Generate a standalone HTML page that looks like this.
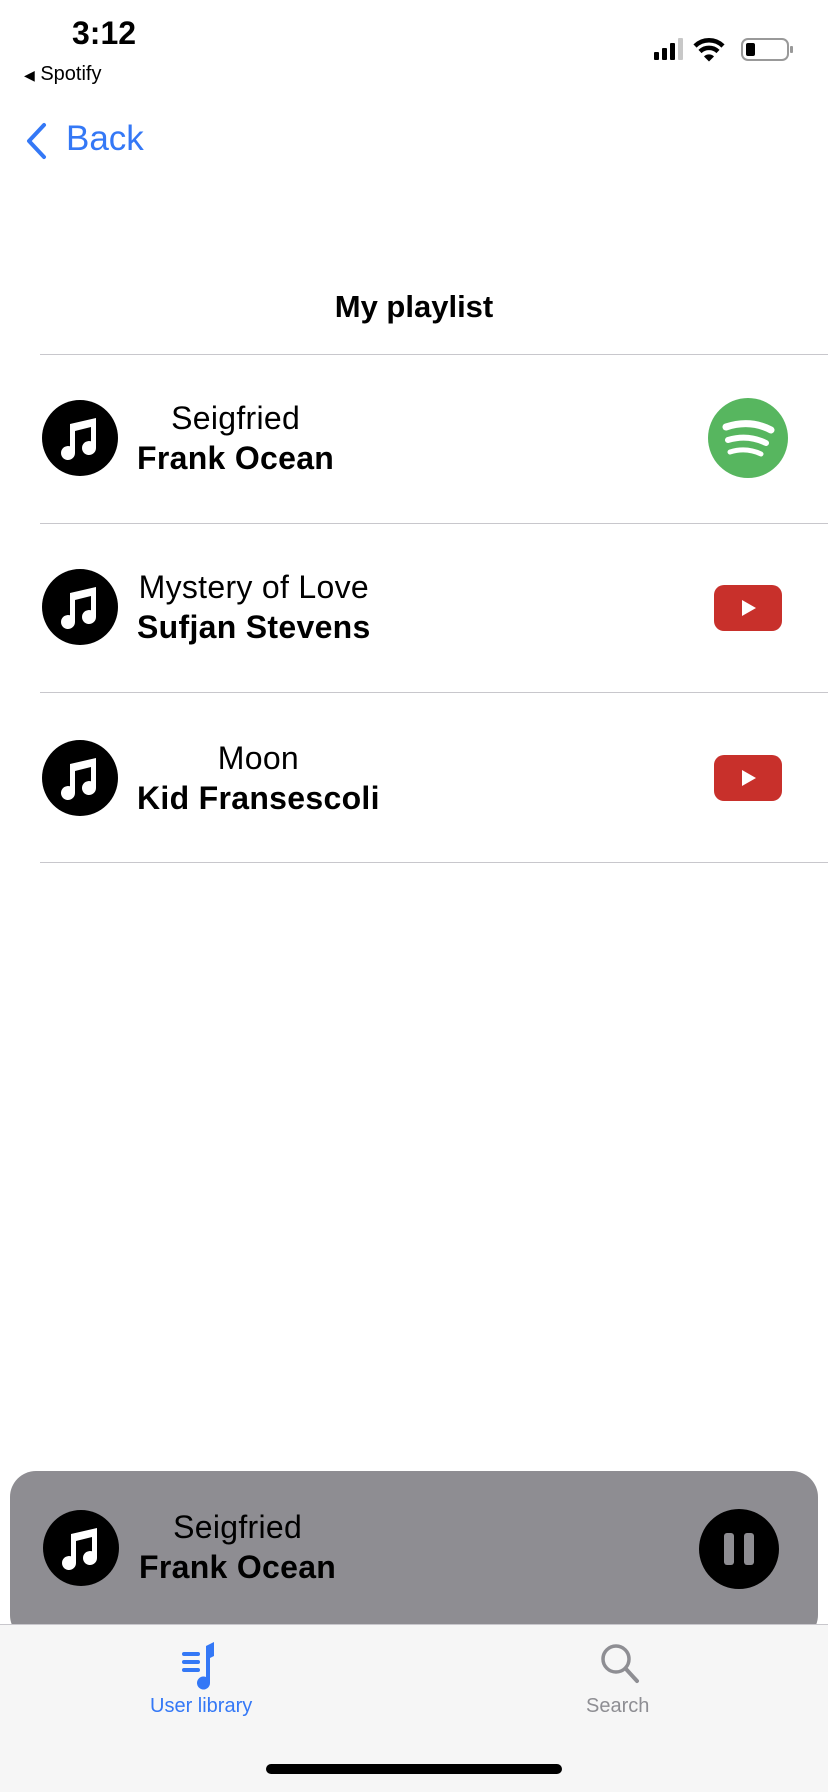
<!DOCTYPE html>
<html><head><meta charset="utf-8"><style>
*{margin:0;padding:0;box-sizing:border-box}
body{width:828px;height:1792px;background:#fff;font-family:"Liberation Sans",sans-serif;position:relative;overflow:hidden;color:#000}
.a{position:absolute}
.sep{position:absolute;left:40px;right:0;height:1px;background:#c8c7cc}
.t{position:absolute;text-align:center;font-size:32px;line-height:40px;white-space:nowrap;letter-spacing:0.3px}
.t b{display:block;font-weight:bold}
</style></head><body>
<div class="a" style="left:72px;top:15px;font-size:32px;font-weight:bold;">3:12</div>
<div class="a" style="left:24px;top:63px;font-size:20px;"><span style="font-size:14px">◀</span> Spotify</div>
<svg class="a" style="left:650px;top:36px" width="150" height="28" viewBox="0 0 150 28">
<rect x="4" y="16" width="5" height="8" rx="1"/><rect x="12" y="12" width="5" height="12" rx="1"/><rect x="20" y="7" width="5" height="17" rx="1"/><rect x="28" y="2" width="5" height="22" rx="1" fill="#c8c8c8"/>
<path d="M45 10a20 20 0 0 1 28 0" stroke="#000" stroke-width="4.5" fill="none"/><path d="M50 15.5a13 13 0 0 1 18 0" stroke="#000" stroke-width="4.5" fill="none"/><path d="M54 20.5l5 5 5-5a7 7 0 0 0-10 0z"/>
<rect x="92" y="3" width="46" height="21" rx="6" fill="none" stroke="#999" stroke-width="2"/><rect x="96" y="7" width="9" height="13" rx="2"/><rect x="140" y="10" width="3" height="7" rx="1" fill="#999"/>
</svg>
<svg class="a" style="left:24px;top:122px" width="26" height="38" viewBox="0 0 26 38"><path d="M20 3L5 19l15 16" stroke="#3478f6" stroke-width="4" fill="none" stroke-linecap="round" stroke-linejoin="round"/></svg>
<div class="a" style="left:66px;top:119px;font-size:35px;color:#3478f6;">Back</div>
<div class="a" style="left:0;width:828px;top:289px;text-align:center;font-size:31px;font-weight:bold;">My playlist</div>
<div class="sep" style="top:354px"></div>
<div class="sep" style="top:523px"></div>
<div class="sep" style="top:692px"></div>
<div class="sep" style="top:862px"></div>

<svg width="0" height="0" style="position:absolute"><defs><g id="n"><circle cx="38" cy="38" r="38"/><path d="M28 24l26-6v30a7 7 0 1 1-5-6.7V27l-16 4v22a7 7 0 1 1-5-6.7z" fill="#fff"/></g></defs></svg>

<svg class="a" style="left:42px;top:400px" width="76" height="76"><use href="#n"/></svg>
<div class="t" style="left:137px;top:398px">Seigfried<b>Frank Ocean</b></div>
<svg class="a" style="left:708px;top:398px" width="80" height="80" viewBox="0 0 80 80"><circle cx="40" cy="40" r="40" fill="#57b65f"/><g stroke="#fff" stroke-linecap="round" fill="none"><path d="M18 29q24-8 45 3" stroke-width="7"/><path d="M20 42q20-6 38 3" stroke-width="6"/><path d="M22 54q16-5 31 2" stroke-width="5"/></g></svg>

<svg class="a" style="left:42px;top:569px" width="76" height="76"><use href="#n"/></svg>
<div class="t" style="left:137px;top:567px">Mystery of Love<b>Sufjan Stevens</b></div>
<svg class="a" style="left:714px;top:585px" width="68" height="46" viewBox="0 0 68 46"><rect width="68" height="46" rx="10" fill="#c8302b"/><path d="M28 15l14 8-14 8z" fill="#fff"/></svg>

<svg class="a" style="left:42px;top:740px" width="76" height="76"><use href="#n"/></svg>
<div class="t" style="left:137px;top:738px">Moon<b>Kid Fransescoli</b></div>
<svg class="a" style="left:714px;top:755px" width="68" height="46" viewBox="0 0 68 46"><rect width="68" height="46" rx="10" fill="#c8302b"/><path d="M28 15l14 8-14 8z" fill="#fff"/></svg>

<div class="a" style="left:10px;top:1471px;width:808px;height:170px;border-radius:26px;background:#8e8d92"></div>
<svg class="a" style="left:43px;top:1510px" width="76" height="76"><use href="#n"/></svg>
<div class="t" style="left:139px;top:1507px">Seigfried<b>Frank Ocean</b></div>
<svg class="a" style="left:699px;top:1509px" width="80" height="80" viewBox="0 0 80 80"><circle cx="40" cy="40" r="40"/><rect x="25" y="24" width="10" height="32" rx="3" fill="#8e8d92"/><rect x="45" y="24" width="10" height="32" rx="3" fill="#8e8d92"/></svg>

<div class="a" style="left:0;top:1624px;width:828px;height:168px;background:#f6f6f6;border-top:1px solid #c8c7cc"></div>
<svg class="a" style="left:180px;top:1640px" width="52" height="52" viewBox="0 0 52 52"><g fill="#3478f6"><rect x="2" y="12" width="18" height="4" rx="2"/><rect x="2" y="20" width="18" height="4" rx="2"/><rect x="2" y="28" width="18" height="4" rx="2"/><path d="M26 6l8-4v14l-4 2v25a6.5 6.5 0 1 1-4-6z"/></g></svg>
<div class="a" style="left:150px;top:1695px;font-size:20px;color:#3478f6;">User library</div>
<svg class="a" style="left:596px;top:1640px" width="50" height="50" viewBox="0 0 50 50"><circle cx="20" cy="19" r="13" fill="none" stroke="#8e8e93" stroke-width="3.5"/><path d="M30 29l11 12" stroke="#8e8e93" stroke-width="4" stroke-linecap="round"/></svg>
<div class="a" style="left:586px;top:1695px;font-size:20px;color:#8e8e93;">Search</div>
<div class="a" style="left:266px;top:1764px;width:296px;height:10px;border-radius:5px;background:#000"></div>
</body></html>
